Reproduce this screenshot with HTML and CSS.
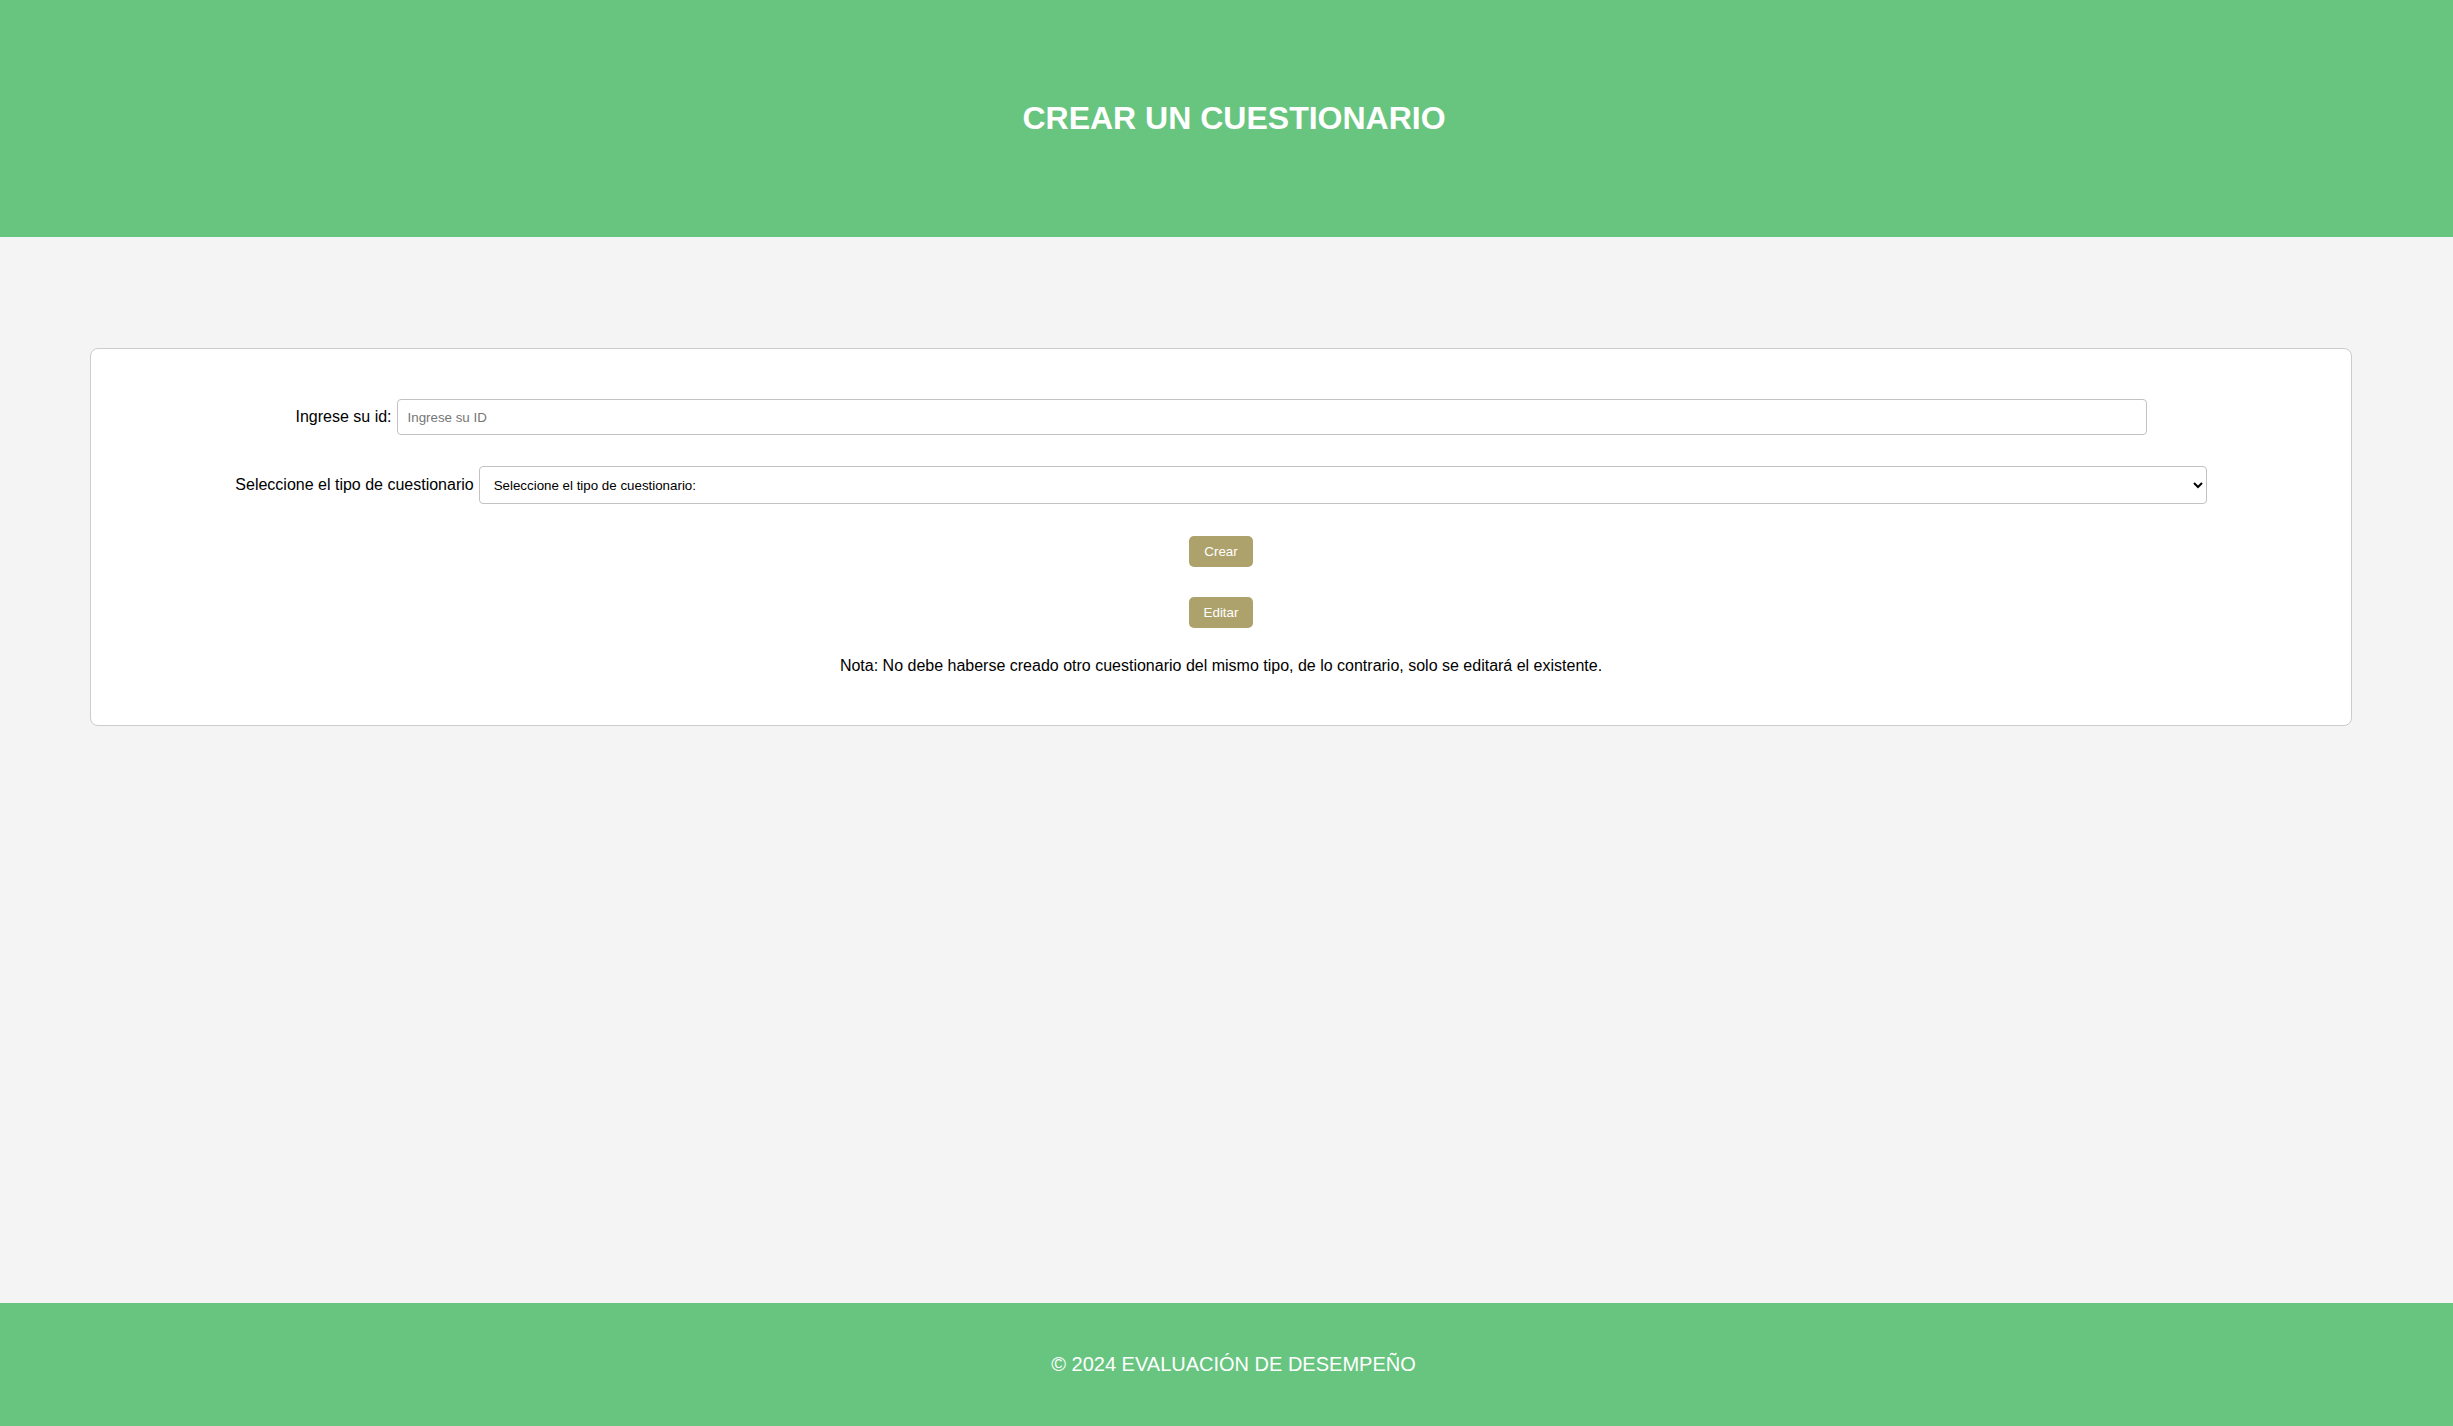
FILE: index.html
```html
<!DOCTYPE html>
<html lang="es">
<head>
<meta charset="UTF-8">
<title>Crear un cuestionario</title>
<link rel="stylesheet" href="styles.css">
</head>
<body>
<header class="site-header">
  <h1 class="site-title">CREAR UN CUESTIONARIO</h1>
</header>
<main class="main">
  <section class="card">
    <form class="form">
      <div class="form-row">
        <label class="form-label" for="uid">Ingrese su id:</label>
        <input class="form-input" id="uid" type="text" placeholder="Ingrese su ID">
      </div>
      <div class="form-row form-row-select">
        <label class="form-label" for="tipo">Seleccione el tipo de cuestionario</label>
        <select class="form-select" id="tipo">
          <option>Seleccione el tipo de cuestionario:</option>
        </select>
      </div>
      <button class="btn" type="button">Crear</button>
      <button class="btn" type="button">Editar</button>
      <p class="note">Nota: No debe haberse creado otro cuestionario del mismo tipo, de lo contrario, solo se editará el existente.</p>
    </form>
  </section>
</main>
<footer class="site-footer">
  <p class="footer-text">© 2024 EVALUACIÓN DE DESEMPEÑO</p>
</footer>
</body>
</html>
```

FILE: styles.css
```css
* {
  margin: 0;
}

html, body {
  height: 100%;
}

body {
  margin: 0;
  min-height: 100vh;
  display: flex;
  flex-direction: column;
  background: #f4f4f4;
  font-family: "Liberation Sans", Arial, sans-serif;
  color: #000;
}

.site-header {
  background: #68c57f;
  padding: 100px 0 100px 15px;
  text-align: center;
}

.site-title {
  font-size: 32px;
  font-weight: bold;
  color: #ffffff;
  line-height: 37px;
}

.main {
  flex: 1;
  padding: 111px 101px 0 90px;
}

.card {
  background: #ffffff;
  border: 1px solid #cccccc;
  border-radius: 8px;
  padding: 50px;
}

.form {
  display: flex;
  flex-direction: column;
  align-items: center;
}

.form-row {
  width: 100%;
  display: flex;
  justify-content: center;
  align-items: center;
  gap: 5px;
  margin-bottom: 31px;
}

.form-row-select {
  margin-bottom: 32px;
}

.form-label {
  font-size: 16px;
  line-height: 18px;
  white-space: nowrap;
}

.form-input {
  box-sizing: content-box;
  width: 80%;
  height: 34px;
  padding: 0 10px;
  border: 1px solid #c4c0c4;
  border-radius: 4px;
  font-family: "Liberation Sans", Arial, sans-serif;
  font-size: 13.333px;
  color: #000;
  background: #fff;
  outline: none;
}

.form-input::placeholder {
  color: #767676;
}

.form-select {
  box-sizing: border-box;
  width: 80%;
  height: 38px;
  padding: 0 10px;
  border: 1px solid #c4c0c4;
  border-radius: 4px;
  font-family: "Liberation Sans", Arial, sans-serif;
  font-size: 13.333px;
  color: #000;
  background: #fff;
}

.btn {
  background: #aea26c;
  color: #ffffff;
  border: none;
  border-radius: 5px;
  padding: 8px 15px;
  font-family: "Liberation Sans", Arial, sans-serif;
  font-size: 13.333px;
  line-height: 15px;
  cursor: pointer;
  margin-bottom: 30px;
}

.btn + .btn {
  margin-bottom: 29px;
}

.note {
  font-size: 16px;
  line-height: 18px;
  text-align: center;
}

.site-footer {
  background: #68c57f;
  padding: 50px 0 50px 14px;
  text-align: center;
}

.footer-text {
  font-size: 20px;
  line-height: 23px;
  color: #ffffff;
}
```
